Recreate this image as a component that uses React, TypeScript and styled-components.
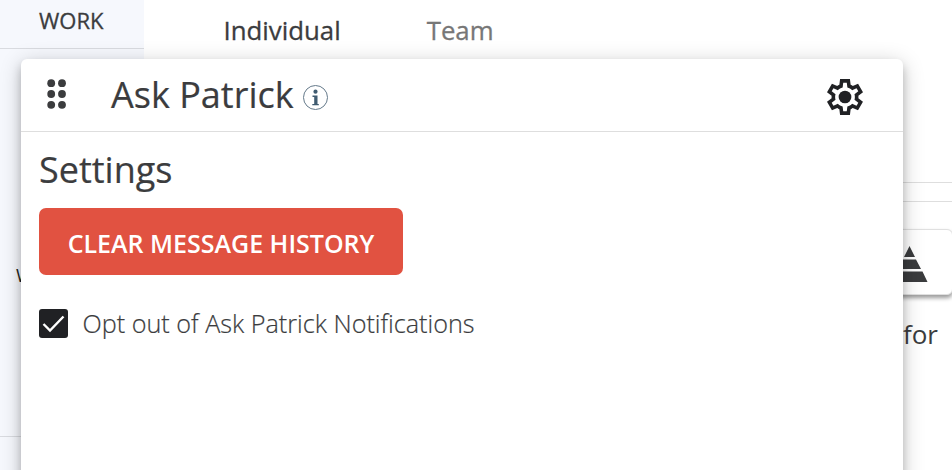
import React from "react";
import styled, { createGlobalStyle } from "styled-components";

const GlobalStyle = createGlobalStyle`
  * { box-sizing: border-box; }
  body { margin: 0; overflow: hidden; background: #fff; font-family: "Open Sans", sans-serif; color: #3b3c3e; }
  h1, h2, p { margin: 0; font-weight: 400; }
`;

const Page = styled.div`
  position: relative;
  display: grid;
  grid-template-columns: 144px 810px;
  width: 952px;
  height: 470px;
  overflow: hidden;
`;

const Sidebar = styled.aside`
  display: flex;
  flex-direction: column;
  background: #f6f8fd;
`;

const SideSection = styled.div<{ $height: number }>`
  height: ${(p) => p.$height}px;
  border-bottom: 1px solid #d9dbe0;
`;

const SideTitle = styled.div`
  padding: 5px 0 0 39px;
  font-size: 22px;
  line-height: 30px;
  font-weight: 500;
  -webkit-text-stroke: 0.3px currentColor;
`;

const SideLabel = styled.div`
  padding: 214px 0 0 16px;
  font-size: 18px;
  line-height: 24px;
  color: #1d1e20;
`;

const Main = styled.main`
  display: flex;
  flex-direction: column;
`;

const Tabs = styled.nav`
  display: flex;
  gap: 86px;
  height: 183px;
  padding: 12px 0 0 79.5px;
  border-bottom: 1px solid #dedede;
`;

const Tab = styled.span<{ $active?: boolean }>`
  font-size: 25.8px;
  line-height: 36px;
  font-weight: 500;
  color: ${(p) => (p.$active ? "#3b3c3e" : "#777")};
  -webkit-text-stroke: 0.3px currentColor;
`;

const Panel = styled.section`
  display: flex;
  flex-direction: column;
  align-items: flex-end;
  margin-top: 18px;
  padding-top: 27px;
  border-top: 1px solid #dedede;
`;

const Tile = styled.div`
  display: flex;
  justify-content: flex-end;
  align-items: center;
  width: 90px;
  height: 66px;
  margin-right: 1px;
  padding: 3px 24.5px 0 0;
  border: 1px solid #e0e0e0;
  border-radius: 6px;
  background: #fff;
  box-shadow: 0 3px 4px rgba(0, 0, 0, 0.4);
`;

const Caption = styled.p`
  padding: 21px 16px 0 0;
  font-size: 26px;
  line-height: 36px;
`;

const Dialog = styled.div`
  position: absolute;
  left: 21px;
  top: 59px;
  width: 882px;
  height: 440px;
  border-radius: 6px 6px 0 0;
  background: #fff;
  box-shadow: 0 4px 22px rgba(0, 0, 0, 0.2), 0 6px 10px rgba(0, 0, 0, 0.2);
`;

const Header = styled.header`
  display: flex;
  align-items: center;
  height: 73px;
  padding: 0 40px 0 26px;
  border-bottom: 1px solid #dedede;
`;

const Grip = styled.svg`
  width: 20px;
  height: 30px;
  margin-bottom: 2px;
`;

const Title = styled.h1`
  margin: 0 8px 0 44px;
  font-size: 36px;
  line-height: 48px;
  -webkit-text-stroke: 0.2px currentColor;
`;

const InfoIcon = styled.svg`
  width: 26px;
  height: 26px;
  margin-top: 4px;
`;

const GearButton = styled.button`
  display: flex;
  margin: 4px 0 0 auto;
  padding: 0;
  border: 0;
  background: none;
`;

const Body = styled.div`
  display: flex;
  flex-direction: column;
  align-items: flex-start;
  padding: 14px 18px;
`;

const Heading = styled.h2`
  font-size: 36px;
  line-height: 48px;
  -webkit-text-stroke: 0.2px currentColor;
`;

const ClearButton = styled.button`
  width: 364px;
  height: 67px;
  margin-top: 14px;
  padding: 3px 0 0;
  border: 0;
  border-radius: 7px;
  background: #e15241;
  color: #fff;
  font: 600 25px/34px "Open Sans", sans-serif;
  white-space: nowrap;
`;

const Option = styled.label`
  display: flex;
  align-items: center;
  gap: 14.5px;
  margin-top: 30px;
  font-size: 25.2px;
  line-height: 36px;
  font-weight: 300;
  -webkit-text-stroke: 0.2px currentColor;
`;

const Check = styled.span`
  display: flex;
  width: 29px;
  height: 29px;
  border-radius: 3px;
  background: #202124;
`;

export default function App() {
  return (
    <>
      <GlobalStyle />
      <Page>
        <Sidebar>
          <SideSection $height={49}>
            <SideTitle>WORK</SideTitle>
          </SideSection>
          <SideSection $height={388}>
            <SideLabel>Workspace</SideLabel>
          </SideSection>
        </Sidebar>
        <Main>
          <Tabs>
            <Tab $active>Individual</Tab>
            <Tab>Team</Tab>
          </Tabs>
          <Panel>
            <Tile>
              <svg width="38" height="38" viewBox="0 0 38 38" fill="#3b3c3e">
                <path d="M19.500 1 25 12H14ZM12.500 14.500H26L31 24H8ZM6.500 26.500H32.500L37.500 37H1Z" />
              </svg>
            </Tile>
            <Caption>for</Caption>
          </Panel>
        </Main>
        <Dialog>
          <Header>
            <Grip viewBox="0 0 20 30" fill="#3b3c3e">
              {[4.2, 15, 25.8].map((y) => (
                <React.Fragment key={y}>
                  <circle cx="4.200" cy={y} r="3.900" />
                  <circle cx="15" cy={y} r="3.900" />
                </React.Fragment>
              ))}
            </Grip>
            <Title>Ask Patrick</Title>
            <InfoIcon viewBox="0 0 26 26">
              <circle cx="13.500" cy="13.500" r="12" fill="none" stroke="#64798a" />
              <circle cx="13.500" cy="7.700" r="2.100" fill="#3f5b70" />
              <path d="M10.500 11.500h5v8.500h1.300v1.300h-6.500v-1.300h1.900v-7h-1.700Z" fill="#3f5b70" />
            </InfoIcon>
            <GearButton aria-label="Settings">
              <svg width="36" height="36" viewBox="78 -882 804 804" fill="#202124">
                <path d="m370-80-16-128q-13-5-24.500-12T307-235l-119 50L78-375l103-78q-1-7-1-13.500v-27q0-6.500 1-13.500L78-585l110-190 119 50q11-8 23-15t24-12l16-128h220l16 128q13 5 24.500 12t22.500 15l119-50 110 190-103 78q1 7 1 13.500v27q0 6.500-2 13.500l103 78-110 190-118-50q-11 8-23 15t-24 12L590-80H370Zm70-80h79l14-106q31-8 57.500-23.500T639-327l99 41 39-68-86-65q5-14 7-29.500t2-31.500q0-16-2-31.500t-7-29.500l86-65-39-68-99 42q-22-23-48.500-38.500T533-694l-13-106h-79l-14 106q-31 8-57.500 23.500T321-633l-99-41-39 68 86 64q-5 15-7 30t-2 32q0 16 2 31t7 30l-86 65 39 68 99-42q22 23 48.500 38.500T427-266l13 106Z" />
                <circle cx="480" cy="-480" r="142" />
              </svg>
            </GearButton>
          </Header>
          <Body>
            <Heading>Settings</Heading>
            <ClearButton>CLEAR MESSAGE HISTORY</ClearButton>
            <Option>
              <Check>
                <svg width="29" height="29" viewBox="0 0 29 29">
                  <path d="M4.500 15 11 21.500 24.500 7.500" fill="none" stroke="#fff" strokeWidth="2.400" />
                </svg>
              </Check>
              Opt out of Ask Patrick Notifications
            </Option>
          </Body>
        </Dialog>
      </Page>
    </>
  );
}
